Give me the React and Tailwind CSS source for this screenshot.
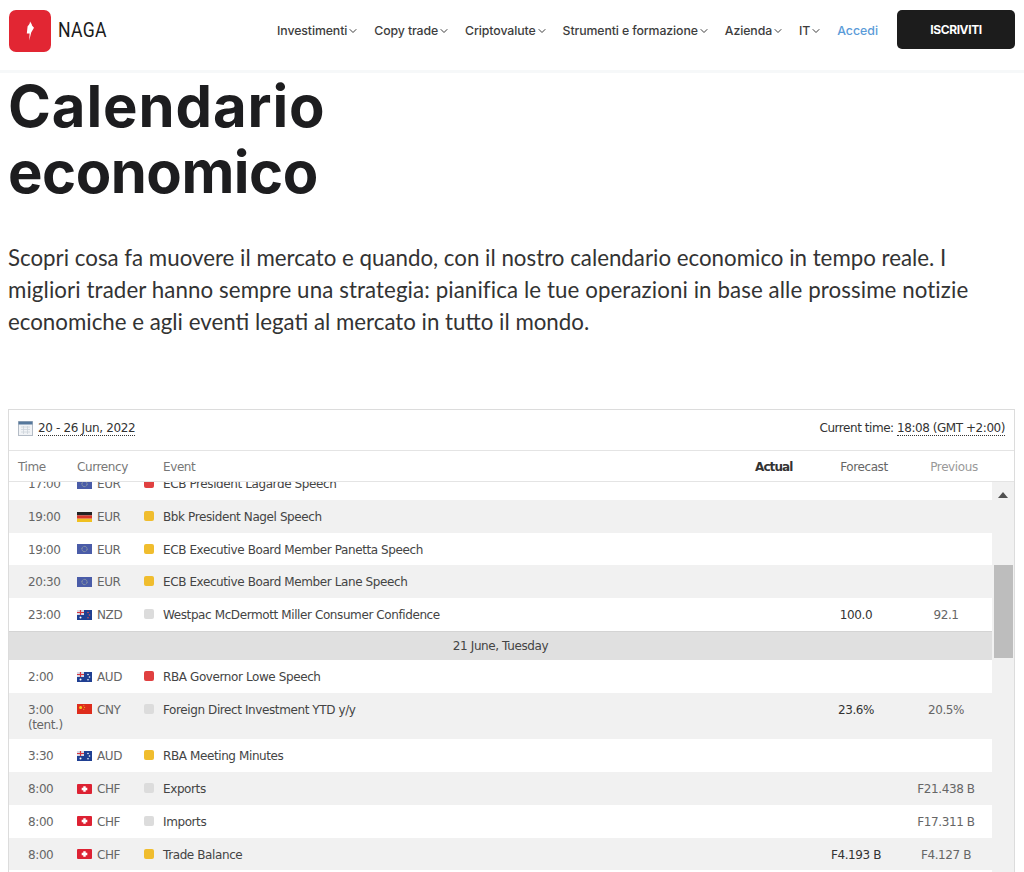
import { ChevronDown } from 'lucide-react';

const NAV = ['Investimenti', 'Copy trade', 'Criptovalute', 'Strumenti e formazione', 'Azienda', 'IT'];

const RED = 'bg-[#e04040]';
const YELLOW = 'bg-[#f0bd2e]';
const GREY = 'bg-[#dcdcdc]';

const ROWS = [
  { time: '19:00', flag: 'de', cur: 'EUR', level: YELLOW, event: 'Bbk President Nagel Speech' },
  { time: '19:00', flag: 'eu', cur: 'EUR', level: YELLOW, event: 'ECB Executive Board Member Panetta Speech' },
  { time: '20:30', flag: 'eu', cur: 'EUR', level: YELLOW, event: 'ECB Executive Board Member Lane Speech' },
  { time: '23:00', flag: 'nz', cur: 'NZD', level: GREY, event: 'Westpac McDermott Miller Consumer Confidence', forecast: '100.0', previous: '92.1' },
  { date: '21 June, Tuesday' },
  { time: '2:00', flag: 'au', cur: 'AUD', level: RED, event: 'RBA Governor Lowe Speech' },
  { time: '3:00', tent: true, flag: 'cn', cur: 'CNY', level: GREY, event: 'Foreign Direct Investment YTD y/y', forecast: '23.6%', previous: '20.5%' },
  { time: '3:30', flag: 'au', cur: 'AUD', level: YELLOW, event: 'RBA Meeting Minutes' },
  { time: '8:00', flag: 'ch', cur: 'CHF', level: GREY, event: 'Exports', previous: 'F21.438 B' },
  { time: '8:00', flag: 'ch', cur: 'CHF', level: GREY, event: 'Imports', previous: 'F17.311 B' },
  { time: '8:00', flag: 'ch', cur: 'CHF', level: YELLOW, event: 'Trade Balance', forecast: 'F4.193 B', previous: 'F4.127 B' },
];

function Flag({ code }) {
  return (
    <svg width="15" height="10" viewBox="0 0 15 10" className="-mt-[2px] shrink-0">
      {code === 'de' && (
        <>
          <rect width="15" height="3.4" fill="#222" />
          <rect y="3.4" width="15" height="3.3" fill="#d8362a" />
          <rect y="6.7" width="15" height="3.3" fill="#f0c020" />
        </>
      )}
      {code === 'eu' && (
        <>
          <rect width="15" height="10" fill="#4a5ca8" />
          <circle cx="7.5" cy="5" r="2.6" fill="none" stroke="#b8c0a0" strokeWidth="0.8" strokeDasharray="1 0.6" />
        </>
      )}
      {(code === 'nz' || code === 'au') && (
        <>
          <rect width="15" height="10" fill="#1f3f92" />
          <rect width="7" height="5" fill="#d9d9e6" />
          <path d="M0 2.5h7M3.5 0v5" stroke="#d8343c" strokeWidth="1.2" />
          <circle cx="11" cy="2.5" r="0.8" fill={code === 'nz' ? '#e05050' : '#fff'} />
          <circle cx="12.5" cy="5" r="0.8" fill={code === 'nz' ? '#e05050' : '#fff'} />
          <circle cx="11" cy="7.8" r="0.8" fill={code === 'nz' ? '#e05050' : '#fff'} />
          <circle cx="3.5" cy="7.5" r="1" fill="#fff" />
        </>
      )}
      {code === 'cn' && (
        <>
          <rect width="15" height="10" fill="#de2c1c" />
          <circle cx="3.6" cy="3.4" r="1.5" fill="#f6d020" />
          <circle cx="6.8" cy="1.8" r="0.5" fill="#f6d020" />
          <circle cx="7.6" cy="3.4" r="0.5" fill="#f6d020" />
          <circle cx="6.8" cy="5.2" r="0.5" fill="#f6d020" />
        </>
      )}
      {code === 'ch' && (
        <>
          <rect width="15" height="10" rx="1" fill="#dd2233" />
          <path d="M6.3 2.2h2.4v1.6h1.6v2.4H8.7v1.6H6.3V6.2H4.7V3.8h1.6z" fill="#fff" />
        </>
      )}
    </svg>
  );
}

function CalendarIcon() {
  return (
    <svg width="15" height="16" viewBox="0 0 15 16" className="shrink-0">
      <rect x="0.5" y="1.5" width="14" height="14" fill="#f1f3f6" stroke="#b4bcc6" />
      <rect x="0.5" y="1.5" width="14" height="3" fill="#56789c" />
      <path d="M3 7h9M3 9.5h9M3 12h9M5.5 6v8M9.5 6v8" stroke="#cdd3da" strokeWidth="0.8" />
    </svg>
  );
}

function Row({ row, shaded }) {
  return (
    <div className={`flex items-start pt-[10px] text-[12px] leading-[15px] text-[#555] ${shaded ? 'bg-[#f1f1f1]' : 'bg-white'} ${row.tent ? 'h-[46.5px]' : 'h-[32.7px]'}`}>
      <div className="w-[68px] shrink-0 pl-[19px] text-[#666]">
        {row.time}
        {row.tent && <div>(tent.)</div>}
      </div>
      <div className="flex w-[67px] shrink-0 items-center gap-[5px] text-[#666]">
        <Flag code={row.flag} />
        {row.cur}
      </div>
      <div className={`mt-[1px] h-[10px] w-[10px] shrink-0 rounded-[2px] ${row.level}`} />
      <div className="ml-[9px] w-[648px] shrink-0 text-[#444]">{row.event}</div>
      <div className="w-[90px] shrink-0 text-center text-[#333]">{row.forecast}</div>
      <div className="w-[90px] shrink-0 text-center text-[#666]">{row.previous}</div>
    </div>
  );
}

export default function App() {
  let stripe = false;

  return (
    <div className="h-[872px] w-[1024px] overflow-hidden bg-white font-['Liberation_Sans',sans-serif]">
      <header className="flex h-[73px] items-start justify-between border-b-[3px] border-[#f6f8f9] px-[9px] pt-[10px]">
        <div className="flex items-center gap-[7px]">
          <div className="flex h-[42px] w-[42px] items-center justify-center rounded-[7px] bg-[#e22633]">
            <svg width="8" height="22" viewBox="0 0 10 24">
              <path d="M5 0c1 2 2.5 3 2.5 5L10 8 6.5 14 7 12 4 24l.5-9L1 15l1-9c1-1 3-3 3-6z" fill="#fff" />
            </svg>
          </div>
          <span className="origin-left scale-x-[0.84] font-['Roboto',sans-serif] text-[21px] tracking-[0.3px] text-[#1b1b1b]">NAGA</span>
        </div>
        <nav className="flex items-center gap-[15px]">
          {NAV.map((item) => (
            <div key={item} className="flex h-[39px] items-center pt-[3px] font-['Inter',sans-serif] text-[12.3px] font-medium tracking-[-0.1px] text-[#3d3d3d]">
              {item}
              <ChevronDown size={12} strokeWidth={2} />
            </div>
          ))}
          <span className="pt-[3px] font-['Inter',sans-serif] text-[12.3px] font-medium text-[#5b9bd8]">Accedi</span>
          <button className="ml-[4px] h-[39px] w-[118px] rounded-[5px] bg-[#1c1c1c] font-['Inter',sans-serif] text-[12px] font-bold tracking-[-0.4px] text-white">
            ISCRIVITI
          </button>
        </nav>
      </header>

      <h1 className="pl-[8px] font-['Inter',sans-serif] text-[58px] font-bold leading-[66px] tracking-[-0.5px] text-[#1d1d1f]">
        <span className="tracking-[0.9px]">Calendario</span>
        <br />
        economico
      </h1>

      <p className="mt-[37px] w-[1000px] pl-[8px] font-['Lato',sans-serif] text-[22.3px] leading-[32px] text-[#333]">
        Scopri cosa fa muovere il mercato e quando, con il nostro calendario economico in tempo reale. I{' '}
        <span className="tracking-[0.09px]">migliori trader hanno sempre una strategia: pianifica le tue operazioni in base alle prossime notizie</span>{' '}
        economiche e agli eventi legati al mercato in tutto il mondo.
      </p>

      <section className="ml-[8px] mt-[71px] w-[1007px] border border-[#dcdcdc] font-['DejaVu_Sans',sans-serif]">
        <div className="flex h-[41px] items-center justify-between border-b border-[#e4e4e4] px-[9px] pb-[4px] text-[12px] tracking-[-0.35px] text-[#333]">
          <div className="flex items-center gap-[5px]">
            <CalendarIcon />
            <span className="border-b border-dotted border-[#333] leading-[14px]">20 - 26 Jun, 2022</span>
          </div>
          <div className="tracking-[-0.45px]">
            Current time: <span className="border-b border-dotted border-[#333] leading-[14px]">18:08 (GMT +2:00)</span>
          </div>
        </div>

        <div className="flex h-[31px] items-center border-b border-[#e4e4e4] pt-[1px] text-[12px] tracking-[-0.4px] text-[#777]">
          <div className="w-[68px] shrink-0 pl-[9px]">Time</div>
          <div className="w-[86px] shrink-0">Currency</div>
          <div className="w-[592px] shrink-0">Event</div>
          <div className="w-[64px] shrink-0 font-bold tracking-[-0.9px] text-[#333]">Actual</div>
          <div className="w-[90px] shrink-0 text-center text-[#666]">Forecast</div>
          <div className="w-[90px] shrink-0 text-center text-[#999]">Previous</div>
        </div>

        <div className="flex h-[400px]">
          <div className="w-[983px] shrink-0 overflow-hidden tracking-[-0.4px]">
            <div className="-mt-[14.7px]">
              <Row row={{ time: '17:00', flag: 'eu', cur: 'EUR', level: RED, event: 'ECB President Lagarde Speech' }} />
              {ROWS.map((row, i) => {
                if (row.date) {
                  stripe = false;
                  return (
                    <div key={i} className="flex h-[29.5px] items-center justify-center border-t border-[#d4d4d4] bg-[#e0e0e0] text-[12px] text-[#444]">
                      {row.date}
                    </div>
                  );
                }
                stripe = !stripe;
                return <Row key={i} row={row} shaded={i > 4 ? !stripe : stripe} />;
              })}
            </div>
          </div>
          <div className="flex w-[22px] shrink-0 flex-col items-center bg-[#f1f1f1]">
            <svg width="10" height="6" viewBox="0 0 10 6" className="mt-[10px]">
              <path d="M5 0l5 6H0z" fill="#505050" />
            </svg>
            <div className="mt-[67px] h-[93px] w-[19px] bg-[#bdbdbd]" />
          </div>
        </div>
      </section>
    </div>
  );
}
